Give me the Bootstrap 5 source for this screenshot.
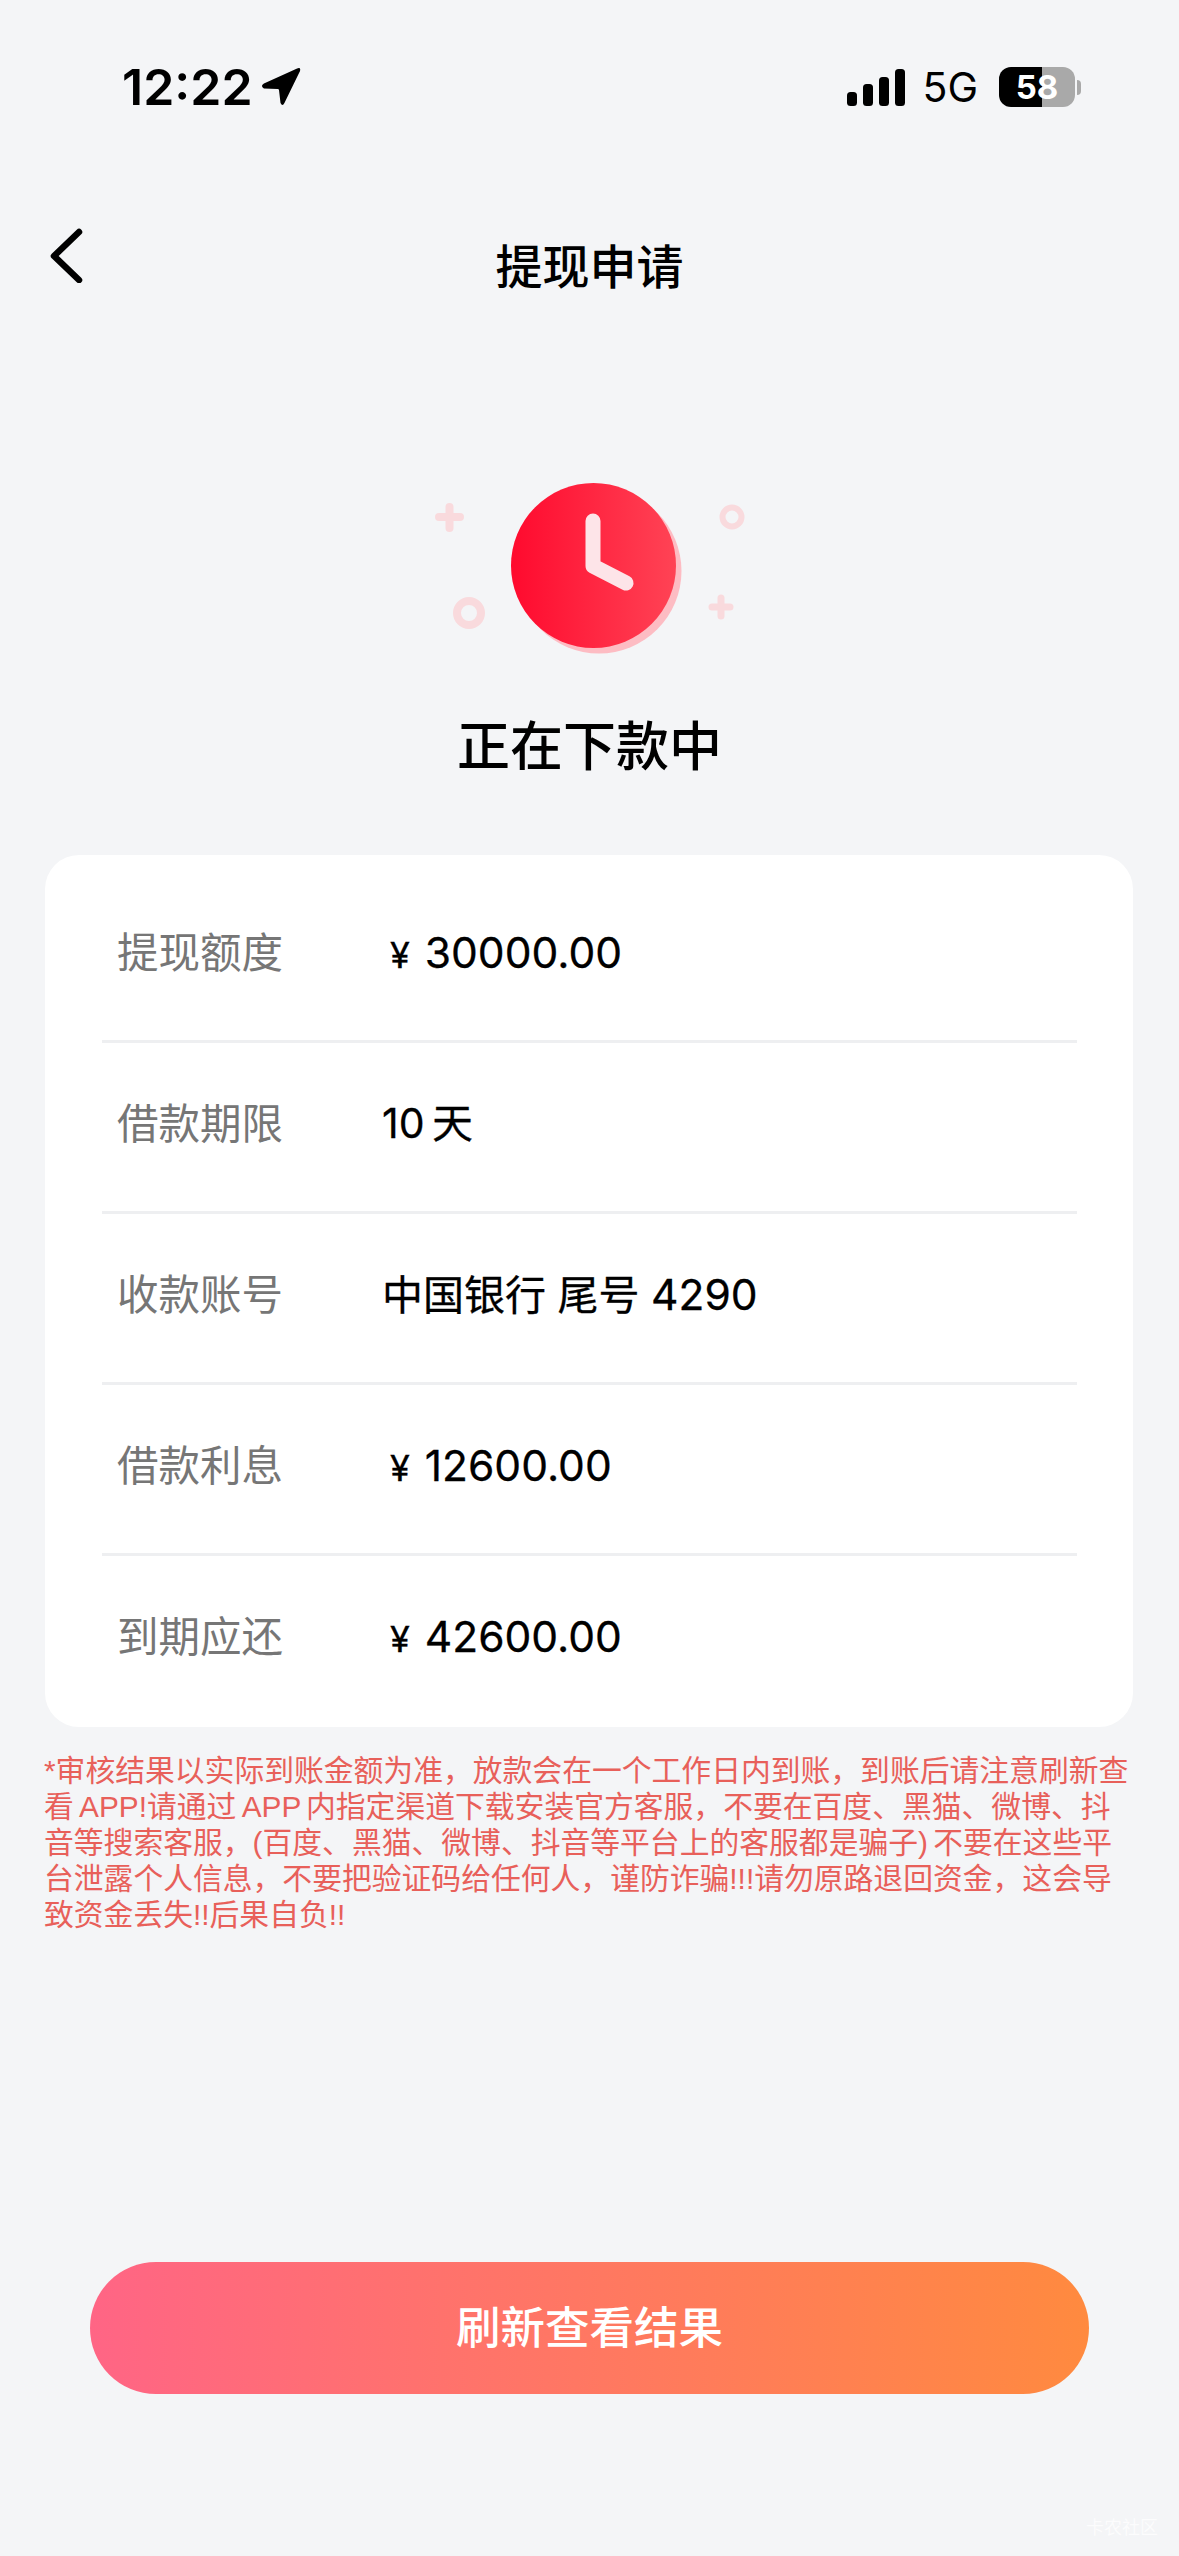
<!DOCTYPE html>
<html lang="zh-CN">
<head>
    <meta charset="UTF-8">
    <meta name="viewport" content="width=device-width, initial-scale=1.0">
    <title>提现申请</title>
    <link rel="stylesheet" href="https://cdn.jsdelivr.net/npm/bootstrap@5.3.0/dist/css/bootstrap.min.css">
    <style>
        body {
            background-color: #f4f5f7;
            font-family: Inter, "Noto Sans CJK SC", sans-serif;
            color: #000;
            margin: 0;
        }
        .screen {
            height: 2556px;
            position: relative;
            overflow: hidden;
        }
        .status-row {
            height: 54px;
            margin-top: 60px;
            padding-left: 122px;
            padding-right: 104px;
        }
        .clock-time {
            font-size: 50px;
            font-weight: 600;
            line-height: 54px;
            letter-spacing: 0;
        }
        .net-label {
            font-size: 41px;
            font-weight: 400;
            line-height: 54px;
            margin: 0 21px 0 17px;
        }
        .batt {
            width: 76px;
            height: 40px;
            border-radius: 12px;
            background: linear-gradient(90deg, #000 0, #000 57%, #a9a9a9 57%, #a9a9a9 100%);
            color: #fff;
            font-size: 33px;
            font-weight: 700;
            line-height: 40px;
            text-align: center;
            padding-right: 0;
            position: relative;
        }
        .batt::after {
            content: "";
            position: absolute;
            left: 78px;
            top: 13px;
            width: 4px;
            height: 15px;
            border-radius: 0 4px 4px 0;
            background: #a9a9a9;
        }
        .nav-row {
            display: grid;
            grid-template-columns: 1fr auto 1fr;
            height: 106px;
            margin-top: 100px;
            padding-left: 48px;
            padding-right: 48px;
        }
        .nav-title {
            font-size: 47px;
            font-weight: 500;
            line-height: 106px;
            margin: 0;
        }
        .back-icon {
            margin-top: 13px;
        }
        .status-art {
            display: block;
            margin: 150px auto 0;
        }
        .status-head {
            font-size: 53px;
            font-weight: 500;
            line-height: 72px;
            margin: 41px 0 0;
        }
        .info-panel {
            margin: 72px 46px 0 45px;
            padding: 17px 56px 0 57px;
            border-radius: 34px;
        }
        .info-line {
            height: 171px;
            padding-bottom: 6px;
            border-bottom: 3px solid #eeeff1;
        }
        .info-line:last-child {
            padding-bottom: 9px;
            border-bottom: 0;
        }
        .info-key {
            width: 280px;
            padding-left: 15px;
            font-size: 41.5px;
            color: #767676;
        }
        .info-val {
            font-size: 41px;
            font-weight: 400;
            -webkit-text-stroke: .3px #000;
        }
        .num-part {
            font-size: 42.5px;
        }
        .cny {
            margin: 0 15px 0 8px;
            font-size: 36px;
        }
        .tip-text {
            margin: 26px 40px 0 44px;
            font-family: "Liberation Sans", "Noto Sans CJK SC", sans-serif;
            font-size: 29.8px;
            line-height: 36px;
            word-spacing: -3px;
            color: #e8605a;
            white-space: nowrap;
        }
        .refresh-btn {
            position: absolute;
            left: 90px;
            top: 2262px;
            width: 999px;
            height: 132px;
            border: 0;
            border-radius: 66px / 66px;
            background: linear-gradient(90deg, #ff6585 0%, #ff8a3f 100%);
            color: #fff;
            font-size: 44.5px;
            font-weight: 500;
        }
        .refresh-btn:hover, .refresh-btn:active {
            color: #fff;
        }
        .wm-text {
            position: absolute;
            right: 21px;
            top: 2514px;
            font-size: 18px;
            color: #fff;
            opacity: .75;
        }
    </style>
</head>
<body>
    <div class="screen">
        <div class="status-row d-flex align-items-center">
            <span class="clock-time">12:22</span>
            <svg class="ms-2" width="40" height="40" viewBox="262 68 41 41">
                <path d="M299 69.5 L265 85 Q261 87.5 265 90 L279 90.5 Q280.5 90.5 280.5 92 L282 105 Q284 109 286 105 L302 72 Q303 68 299 69.5 Z" fill="#000"/>
            </svg>
            <div class="ms-auto d-flex align-items-center">
                <svg width="58" height="37" viewBox="0 0 58 37">
                    <rect x="0" y="23" width="10" height="14" rx="3.5" fill="#000"/>
                    <rect x="16" y="15" width="10" height="22" rx="3.5" fill="#000"/>
                    <rect x="32" y="8" width="10" height="29" rx="3.5" fill="#000"/>
                    <rect x="48" y="0" width="10" height="37" rx="3.5" fill="#000"/>
                </svg>
                <span class="net-label">5G</span>
                <div class="batt">58</div>
            </div>
        </div>

        <div class="nav-row">
            <svg class="back-icon" width="36" height="56" viewBox="0 0 36 56">
                <path d="M31 5 L6 29 L31 53" fill="none" stroke="#000" stroke-width="6.5" stroke-linecap="round" stroke-linejoin="round"/>
            </svg>
            <h1 class="nav-title">提现申请</h1>
            <div></div>
        </div>

        <svg class="status-art" width="340" height="200" viewBox="420 470 340 200">
            <defs>
                <linearGradient id="faceGrad" x1="0" y1="0" x2="1" y2="0">
                    <stop offset="0" stop-color="#ff0a2e"/>
                    <stop offset="1" stop-color="#ff4355"/>
                </linearGradient>
            </defs>
            <circle cx="599" cy="571" r="82.5" fill="#fdbcc3"/>
            <circle cx="593.5" cy="565.5" r="82.5" fill="url(#faceGrad)"/>
            <path d="M593 521 V566 L626 583" fill="none" stroke="#fde4e8" stroke-width="15" stroke-linecap="round" stroke-linejoin="round"/>
            <path d="M439 517 H460 M449.500 507 V528" stroke="#f9dadd" stroke-width="8" stroke-linecap="round"/>
            <path d="M712 607 H730 M721 598 V616" stroke="#f9dadd" stroke-width="7" stroke-linecap="round"/>
            <circle cx="732" cy="517" r="9.5" fill="none" stroke="#f9dadd" stroke-width="6"/>
            <circle cx="469" cy="613" r="12" fill="none" stroke="#f9dadd" stroke-width="8"/>
        </svg>

        <h2 class="status-head text-center">正在下款中</h2>

        <div class="card border-0 info-panel">
            <div class="info-line d-flex align-items-center">
                <span class="info-key">提现额度</span>
                <span class="info-val"><span class="cny">¥</span><span class="num-part">30000.00</span></span>
            </div>
            <div class="info-line d-flex align-items-center">
                <span class="info-key">借款期限</span>
                <span class="info-val">10&#8201;天</span>
            </div>
            <div class="info-line d-flex align-items-center">
                <span class="info-key">收款账号</span>
                <span class="info-val">中国银行 尾号 <span class="num-part">4290</span></span>
            </div>
            <div class="info-line d-flex align-items-center">
                <span class="info-key">借款利息</span>
                <span class="info-val"><span class="cny">¥</span><span class="num-part">12600.00</span></span>
            </div>
            <div class="info-line d-flex align-items-center">
                <span class="info-key">到期应还</span>
                <span class="info-val"><span class="cny">¥</span><span class="num-part">42600.00</span></span>
            </div>
        </div>

        <p class="tip-text">*审核结果以实际到账金额为准，放款会在一个工作日内到账，到账后请注意刷新查<br>看 APP!请通过 APP 内指定渠道下载安装官方客服，不要在百度、黑猫、微博、抖<br>音等搜索客服，(百度、黑猫、微博、抖音等平台上的客服都是骗子) 不要在这些平<br>台泄露个人信息，不要把验证码给任何人，谨防诈骗!!!请勿原路退回资金，这会导<br>致资金丢失!!后果自负!!</p>

        <button type="button" class="btn refresh-btn">刷新查看结果</button>
        <span class="wm-text">卡农社区</span>
    </div>
    <script src="https://cdn.jsdelivr.net/npm/bootstrap@5.3.0/dist/js/bootstrap.bundle.min.js"></script>
</body>
</html>
